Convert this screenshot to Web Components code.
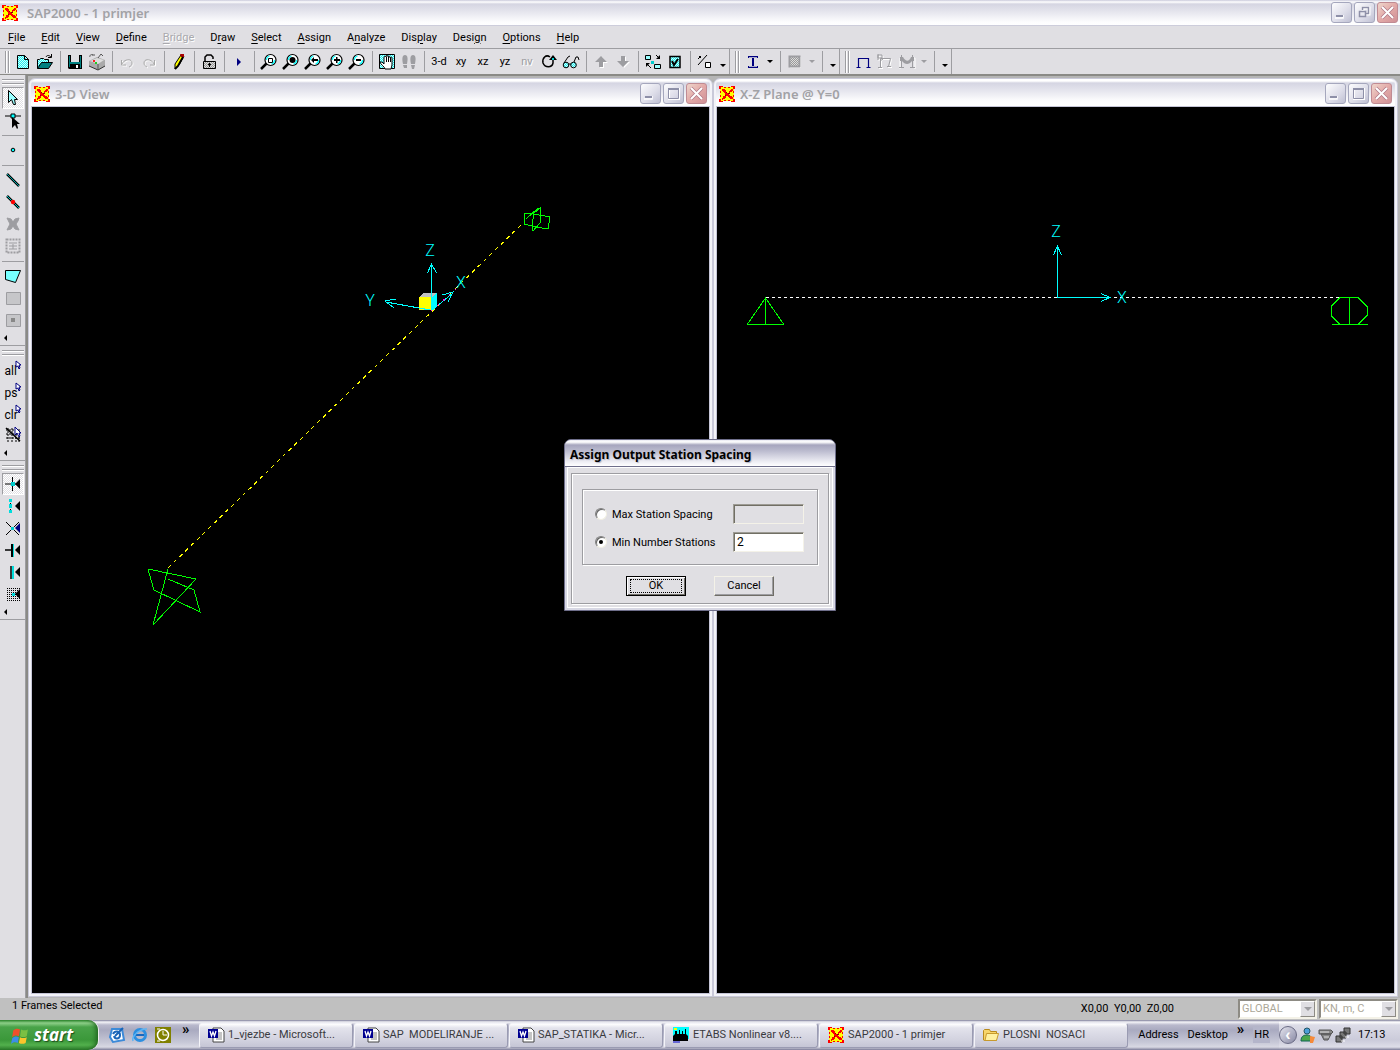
<!DOCTYPE html>
<html lang="hr">
<head>
<meta charset="utf-8">
<title>SAP2000 - 1 primjer</title>
<style>
    html, body {
        margin: 0;
        height: 100%;
    }

    body {
        --face: #e0dfe3;
        --shadow: #9d9da1;
        --title-font: "Noto Sans", "Open Sans", sans-serif;
        font: 11px/14px Roboto, "Liberation Sans", sans-serif;
        color: #000;
        background: var(--face);
        overflow: hidden;
    }
</style>
</head>
<body>
<sap-app></sap-app>

<script>
const MAGNIFIER = '<path d="M0 15l6-6" stroke="#000" stroke-width="2.500"/><circle cx="9.500" cy="6" r="5.500" fill="#fff" stroke="#000" stroke-width="1.200"/><path d="M5.500 6a4 4 0 0 1 3-4M13.500 6a4 4 0 0 1-3 4" stroke="#0ff" stroke-width="1.200"/>';
const NODE_ARROW = '<path d="M15 3v10l-5-5z" fill="#000"/>';
const PICK = '<path d="M10 0v8l2-2 2 4 1-1-1-3h2z" fill="#fff" stroke="#000080"/>';
const WORD = '<path d="M5 1h8l3 3v11H5z" fill="#fff" stroke="#444"/><path d="M8 6h6M8 8h6M8 10h6M8 12h6" stroke="#888"/><path d="M0 2h10v9H0z" fill="#000090"/><path d="M2 4l1.500 5L5 5l1.500 4L8 4" stroke="#fff" stroke-width="1.300"/>';

// 16x16 drawings, #cyan and #gray are the dithered fills
const ICONS = {
    sap: '<path d="M1 1h14v14H1z" fill="#ff0"/><path d="M0 0h4v1H2v2H0zM12 0h4v3h-2V1h-2zM0 13h2v2h2v1H0zM12 15h2v-2h2v3h-4zM5 1h2v1H5zM9 1h2v1H9zM5 14h2v1H5zM9 14h2v1H9zM1 5h1v2H1zM1 9h1v2H1zM14 5h1v2h-1zM14 9h1v2h-1z" fill="#f00"/><path d="M3 3h3v1h1v2h1v1h2V5h1V4h1V3h2v2h-1v1h-2v1h-1v2h1v1h2v1h1v2h-3v-1h-1v-1H9v-1H7v2H6v1H4v1H3v-2h1v-2h2V7H5V6H4V5H3z" fill="#f00"/><path d="M7 6h1v1H7zM9 7h2v1H9zM6 9h1v1H6z" fill="#800"/>',
    new: '<path d="M2.500 1.500h7l4 4v9h-11z" fill="url(#cyan)" stroke="#000"/><path d="M9.500 1.500v4h4" stroke="#000"/>',
    open: '<path d="M0.500 14.500v-9h2l1-1h3l1 1h4v3" fill="url(#cyan)" stroke="#000"/><path d="M0.500 14.500l4-6h11l-4 6z" fill="#008080" stroke="#000"/><path d="M9 3c1-2 3-2 5 0M14.500 0v3.500H11" stroke="#000"/>',
    save: '<path d="M1 1h14v14H2l-1-1z" fill="#000"/><path d="M2 2h1v11H2zM13 2h1v12h-1z" fill="#008080"/><path d="M4 1h8v7H4z" fill="#e0dfe3"/><path d="M2 8h12v2H2z" fill="#008080"/><path d="M9 11h2v3H9z" fill="#fff"/>',
    print: '<path d="M0 7l8-4 8 3v6l-7 4-9-4z" fill="#aaa"/><path d="M1 7l7-3 7 2-6 4z" fill="#ddd"/><path d="M0 12l9 4 7-4" stroke="#333"/><path d="M9 10v5M3 1h3M1 3c-1-2 2-3 3-2M9 4l3-4 2 2" stroke="#555"/><path d="M4 6h2v2H4z" fill="#f22"/><path d="M6 8h2v2H6z" fill="#2c2"/>',
    undo: '<path d="M2.500 6v5H7M3 10c2-5 10-6 10-1 0 2-1 3-3 4" stroke="#fff" transform="translate(1 1)"/><path d="M2.500 6v5H7M3 10c2-5 10-6 10-1 0 2-1 3-3 4" stroke="#aaa"/>',
    redo: '<path d="M13.500 6v5H9M13 10C11 5 3 4 3 9c0 2 1 3 3 4" stroke="#fff" transform="translate(1 1)"/><path d="M13.500 6v5H9M13 10C11 5 3 4 3 9c0 2 1 3 3 4" stroke="#aaa"/>',
    pencil: '<path d="M10 1l3 1-5 9-4 4v-5z" fill="#ff0" stroke="#000"/><path d="M9 0h4v3h-3z" fill="#a00"/><path d="M12 3L7 12l-3 3" stroke="#000" stroke-width="2"/>',
    lock: '<path d="M4 7V3l2-2h4l2 2v2" stroke="#000" stroke-width="1.500"/><path d="M2.500 7.500h12v7h-12z" fill="url(#gray)" stroke="#000"/><path d="M8.500 9v4M7 10.500h3" stroke="#000"/>',
    run: '<path d="M6 4l4 4-4 4z" fill="#000080"/>',
    zoomwin: MAGNIFIER + '<path d="M7.500 4.500h4v4h-4z" stroke="#000"/>',
    zoomfull: MAGNIFIER + '<circle cx="9.500" cy="6" r="3" fill="#000"/>',
    zoomprev: MAGNIFIER + '<path d="M6 6l3-3v2h4v2H9v2z" fill="#000"/>',
    zoomin: MAGNIFIER + '<path d="M9 3h1.500v2H13v2h-2.500v2H9V7H7V5h2z" fill="#000"/>',
    zoomout: MAGNIFIER + '<path d="M7 5h5v2H7z" fill="#000"/>',
    pan: '<path d="M0.500 0.500h15v14H0.500z" fill="url(#cyan)" stroke="#000"/><path d="M6 15c0-2-5-5-5-7h2l2 2V3c1-1 2-1 2 0V2c1-1 2-1 2 0v1c1-1 2-1 2 0v1c1-1 2-1 2 0v7l-1 4z" fill="#fff" stroke="#000"/><path d="M7.500 3v5M9.500 3v5M11.500 4v4" stroke="#000"/>',
    feet: '<path d="M4 1c3 0 3 4 2 9H2C1 5 1 1 4 1zM12 1c3 0 3 4 2 9h-4C9 5 9 1 12 1zM2 11h4v3H3zM10 11h4l-1 4h-2z" fill="#9d9da1"/>',
    rotate: '<path d="M9 3C5 0 1 4 2 9c2 5 9 5 10 0V6" stroke="#000" stroke-width="1.500"/><path d="M8 6l4-5 4 5z" fill="#000"/><path d="M11 4h2v2h-2z" fill="#0cc"/>',
    glasses: '<circle cx="3" cy="11" r="2.800" fill="url(#cyan)" stroke="#000"/><circle cx="10.500" cy="11" r="2.800" fill="url(#cyan)" stroke="#000"/><path d="M1 9l4-6 2-1M11 8l2-5h2l1 3M6 10h2" stroke="#000"/>',
    up: '<path d="M9 3l6 6h-4v5H7V9z" fill="#fff"/><path d="M8 2l6 6h-4v5H6V8H2z" fill="#9d9da1"/>',
    down: '<path d="M9 14l6-6h-4V3H7z" fill="#fff"/><path d="M8 13l6-6h-4V2H6v5H2z" fill="#9d9da1"/>',
    shrink: '<path d="M0.500 1.500h5v4h-5zM9.500 10.500h6v4h-6z" fill="#9ff" stroke="#000"/><path d="M15 5h-4l4-4zM1 9h4l-4 4z" fill="#000"/><path d="M11 1l3 3M1 9l5 5" stroke="#000"/><path d="M6 7h3v3H6z" fill="#0cc"/>',
    check: '<path d="M3 2.500h10v11H3z" fill="url(#cyan)" stroke="#000" stroke-width="1.500"/><path d="M5 7l2 4 4-6" stroke="#000" stroke-width="2"/>',
    ratio: '<path d="M1 11L10 1" stroke="#000"/><path d="M2 2h2v2H2zM1 4h1v1H1z" fill="#000"/><path d="M8.500 8.500h5v5h-5z" fill="#fff" stroke="#000"/>',
    ibeam: '<path d="M3 2h10v2H9v8h4v2H3v-2h4V4H3z" fill="#000080"/><path d="M4 3.500h8M4 12.500h8" stroke="#aac"/>',
    area: '<path d="M3 3h11v11H3z" fill="#fff"/><path d="M2.500 2.500h10v10h-10z" fill="url(#gray)" stroke="#9d9da1" stroke-width="2"/>',
    portal: '<path d="M3.500 13V4.500h10V13M1.500 13.500h4M11.500 13.500h4" stroke="#000080" stroke-width="1.200"/>',
    portal2: '<path d="M4.500 14V5.500h10l-2 8M2 14.500h4M11 13.500h4M2 2h4v3H2zM4 7l3-2M2 1v6" stroke="#fff"/><path d="M3.500 13V4.500h10l-2 8M1 13.500h4M10 12.500h4M1 1h4v3H1zM3 7l3-2M1 0v6" stroke="#9d9da1"/>',
    moment: '<path d="M1 15V4h3c3 5 7 5 9 0h3v11" stroke="#fff"/><path d="M1 3h3c3 5 6 5 8 0h3v4h-2c-3 4-7 4-10 0H1z" fill="#9d9da1"/><path d="M2.500 1v12M13.500 1v12M0 13.500h5M11 13.500h5" stroke="#9d9da1"/>',
    pointer: '<path d="M3.500 0.500v12l3-3 2 5h2l-1-5h3z" fill="#9ff" stroke="#000"/>',
    reshape: '<path d="M0 4h16" stroke="#000"/><path d="M6 2h4v4H6z" fill="#0ff" stroke="#000"/><path d="M7 5v11l3-3 2 4 1-1-1-4h3z" fill="#000"/>',
    dot: '<circle cx="8" cy="8" r="1.800" fill="#0ff" stroke="#000"/>',
    line: '<path d="M2 2l12 12" stroke="#000" stroke-width="2.500"/><path d="M2 2l12 12" stroke="#0aa"/>',
    linedot: '<path d="M2 2l12 12" stroke="#000" stroke-width="2.500"/><path d="M2 2l12 12" stroke="#0cc"/><circle cx="8" cy="8" r="2.200" fill="#f00"/>',
    brace: '<path d="M2 2l4 1 2 3 2-3 4-1-1 3-2 3 3 6-4-1-2-3-2 3-4 1 3-6z" fill="#9d9da1" stroke="#9d9da1"/>',
    quick: '<path d="M1.500 1.500h13v13h-13z" stroke="#9d9da1" stroke-width="2" stroke-dasharray="2 1"/><path d="M4 5h8M4 8h8M4 11h8M8 6v5" stroke="#9d9da1"/>',
    poly: '<path d="M0.500 2.500h15l-5 12-10-3z" fill="#7ff" stroke="#000"/>',
    grayrect: '<path d="M1.500 2.500h14v12h-14z" fill="#c6c6c9" stroke="#9d9da1"/>',
    graydot: '<path d="M1.500 2.500h14v12h-14z" fill="#c6c6c9" stroke="#9d9da1"/><path d="M6 6h4v4H6z" fill="#888"/>',
    clearsel: '<path d="M1 3h14M1 7h14M1 11h14M3 1v14M7 1v14M11 1v14M14 4v11" stroke="#000" stroke-dasharray="2 1"/><path d="M1 1l14 13" stroke="#000" stroke-width="1.500"/>' + PICK,
    snappoint: '<path d="M0 8h14M7.500 1v14" stroke="#000"/><path d="M6 6h4v4H6z" fill="#0cc"/>' + NODE_ARROW,
    snapends: '<path d="M5.500 2v13" stroke="#000" stroke-dasharray="2 1"/><path d="M4 1h3v3H4zM4 6h3v4H4zM4 12h3v3H4z" fill="#0dd"/>' + NODE_ARROW,
    snapcross: '<path d="M1 2l13 13M1 15L14 2" stroke="#000"/><path d="M15 3v10l-5-5z" fill="#000080"/><path d="M6 7h3v3H6z" fill="#0cc"/>',
    snapperp: '<path d="M0 8h7" stroke="#000" stroke-width="1.500"/><path d="M7 2v13" stroke="#000" stroke-width="2"/><path d="M8.500 2v13" stroke="#0dd"/>' + NODE_ARROW,
    snapline: '<path d="M6 2v13" stroke="#000" stroke-width="1.500"/><path d="M8 2v13" stroke="#0dd" stroke-width="2"/>' + NODE_ARROW,
    snapgrid: '<path d="M2 2.500h13M2 4.500h13M2 6.500h13M2 8.500h13M2 10.500h13M2 12.500h13M2 14.500h13" stroke="#000" stroke-dasharray="1 1"/><path d="M7 7h3v3H7z" fill="#0dd"/>' + NODE_ARROW,
    outlook: '<path d="M3 2h10l2 11-11 2-3-5z" fill="#fff" stroke="#3c8ad8" stroke-width="2"/><path d="M4 7c2-4 7-3 7 1s-5 5-6 1M6 9l8-8" stroke="#1a65b8" stroke-width="2"/>',
    ie: '<circle cx="8" cy="8" r="5.500" stroke="#2d8fe0" stroke-width="3"/><path d="M4 8h8" stroke="#1668c0" stroke-width="2"/><path d="M1 14C-1 9 9 1 15 2" stroke="#5bb4f5" stroke-width="1.500"/>',
    clock: '<path d="M0 0h16v16H0z" fill="#808000"/><circle cx="8" cy="8" r="5.500" stroke="#fff" stroke-width="1.500"/><path d="M8 4v4h4M2 2h3M2 14h3" stroke="#fff"/>',
    word: WORD,
    etabs: '<path d="M0 0h16v12H0z" fill="#0ff"/><path d="M0 14v-5l2-2V4h2v3h2V3h1v4h2V4h1v3h2V2h1v5l2 2v5z" fill="#000"/><path d="M1 1h3v2H1z" fill="#ff0"/><path d="M0 15h7" stroke="#00c"/>',
    folder: '<path d="M0.500 13V3.500l1-1h5l1 2h6v9h-12z" fill="#f7d56a" stroke="#b98a1d"/><path d="M3.500 6.500h12l-2 7H2z" fill="#fff0a0" stroke="#c89a2d"/>',
    person: '<circle cx="8" cy="4" r="3" fill="#4b9fd8" stroke="#256"/><path d="M2 14c0-5 3-6 6-6 4 0 5 3 5 6z" fill="#4ba64b" stroke="#165"/><path d="M11 9l5 1-2 6h-3z" fill="#f58a3a"/>',
    scanner: '<path d="M2 3h12l2 2-2 2H2zM4 7h10l-3 6H7z" fill="#888" stroke="#555"/><path d="M3 5h9M7 10h5" stroke="#ddd"/>',
    network: '<path d="M9 1h6v6H9zM5 5h6v6H5zM1 9h6v6H1z" fill="#777" stroke="#333"/><path d="M10 10h4M6 14h4" stroke="#fff"/>',
    flag: '<path d="M2 4c2-2 4-2 6-1L7 9c-2-1-4-1-6 1z" fill="#f0502a"/><path d="M9 3c2 1 4 1 6 0l-1 6c-2 1-4 1-6 0z" fill="#7bc043"/><path d="M1 11c2-2 4-2 6-1l-1 5c-2-1-4-1-6 1z" fill="#3c8ee8"/><path d="M8 10c2 1 4 1 6 0l-1 5c-2 1-4 1-6 0z" fill="#fbc52c"/>'
};

class XpIcon extends HTMLElement {
    connectedCallback() {
        const size = this.getAttribute('size') || '16';
        this.attachShadow({ mode: 'open' }).innerHTML = `
            <style>
                :host { display: block; flex: none; width: ${size}px; height: ${size}px; white-space: normal; }
                svg { display: block; width: 100%; height: 100%; overflow: visible; }
            </style>
            <svg viewBox="0 0 16 16" fill="none" aria-hidden="true">
                <defs>
                    <pattern id="cyan" width="2" height="2" patternUnits="userSpaceOnUse">
                        <path d="M0 0h2v2H0z" fill="#cff"/><path d="M0 0h1v1H0zM1 1h1v1H1z" fill="#2ee"/>
                    </pattern>
                    <pattern id="gray" width="2" height="2" patternUnits="userSpaceOnUse">
                        <path d="M0 0h2v2H0z" fill="#ddd"/><path d="M0 0h1v1H0zM1 1h1v1H1z" fill="#999"/>
                    </pattern>
                </defs>
                ${ICONS[this.getAttribute('name')]}
            </svg>
        `;
    }
}

class ToolButton extends HTMLElement {
    connectedCallback() {
        const icon = this.getAttribute('icon');
        const pressed = this.hasAttribute('pressed');
        this.attachShadow({ mode: 'open' }).innerHTML = `
            <style>
                :host { display: block; flex: none; width: 22px; height: 22px; }
                button {
                    display: flex;
                    align-items: center;
                    justify-content: center;
                    box-sizing: border-box;
                    width: 100%;
                    height: 100%;
                    padding: 0;
                    border: 1px solid transparent;
                    background: none;
                    font: inherit;
                    color: #000;
                }
                button:disabled { color: var(--shadow); text-shadow: 1px 1px #fff; }
                button[aria-pressed="true"] {
                    border-color: var(--shadow) #fff #fff var(--shadow);
                    background: repeating-conic-gradient(#fff 0 25%, #e0dfe3 0 50%) 0 0 / 2px 2px;
                }
            </style>
            <button type="button" aria-label="${this.getAttribute('label') || icon}"
                ${pressed ? 'aria-pressed="true"' : ''} ${this.hasAttribute('off') ? 'disabled' : ''}>
                ${icon ? `<xp-icon name="${icon}"></xp-icon>` : '<slot></slot>'}
            </button>
        `;
    }
}

class ToolDrop extends HTMLElement {
    connectedCallback() {
        this.attachShadow({ mode: 'open' }).innerHTML = `
            <style>
                :host { display: flex; flex: none; width: 12px; height: 22px; }
                :host([more]) { width: 13px; }
                button {
                    display: flex;
                    align-items: center;
                    justify-content: center;
                    width: 100%;
                    padding: 0;
                    border: 0;
                    background: none;
                    color: #000;
                }
                :host([more]) button { padding-top: 7px; }
                button:disabled { color: var(--shadow); }
                i { border: 3px solid transparent; border-top-color: currentColor; border-bottom: 0; }
                :host([side]) { width: 22px; height: 14px; }
                :host([side]) button { justify-content: flex-start; padding-left: 2px; }
                :host([side]) i { border: 3px solid transparent; border-right-color: #000; border-left: 0; }
            </style>
            <button type="button" aria-label="More" ${this.hasAttribute('off') ? 'disabled' : ''}><i></i></button>
        `;
    }
}

class SelectButton extends HTMLElement {
    connectedCallback() {
        this.attachShadow({ mode: 'open' }).innerHTML = `
            <style>
                :host { display: block; width: 22px; height: 22px; }
                button {
                    display: grid;
                    grid-template-columns: 10px 7px;
                    justify-content: start;
                    width: 100%;
                    height: 100%;
                    padding: 2px 0 2px 3px;
                    border: 0;
                    background: none;
                    font: 12px/14px Roboto, "Liberation Sans", sans-serif;
                    color: #000;
                }
                span { align-self: end; justify-self: start; }
                svg { width: 7px; height: 10px; overflow: visible; }
            </style>
            <button type="button">
                <span><slot></slot></span>
                <svg viewBox="0 0 7 10" aria-hidden="true"><path d="M1 1v6l2-1 1 3 1-1-1-3h2z" fill="#fff" stroke="#000080"/></svg>
            </button>
        `;
    }
}

class ToolGroup extends HTMLElement {
    connectedCallback() {
        this.attachShadow({ mode: 'open' }).innerHTML = `
            <style>
                :host {
                    display: flex;
                    align-items: center;
                    box-sizing: border-box;
                    border-right: 1px solid var(--shadow);
                }
                .grip {
                    flex: none;
                    box-sizing: border-box;
                    width: 4px;
                    height: 22px;
                    margin: 0 3px 0 5px;
                    border: solid var(--shadow);
                    border-width: 0 1px;
                    box-shadow: 1px 0 #fff, inset 1px 0 #fff;
                }
                ::slotted(hr) {
                    flex: none;
                    width: 1px;
                    height: 21px;
                    margin: 0 3px 0 4px;
                    border: 0;
                    background: var(--shadow);
                }
                :host([vertical]) {
                    flex-direction: column;
                    border-right: 0;
                    border-bottom: 1px solid var(--shadow);
                }
                :host([vertical]) .grip {
                    width: 22px;
                    height: 5px;
                    margin: 4px 0 3px;
                    border-width: 1px 0;
                    box-shadow: 0 1px #fff, inset 0 1px #fff;
                }
                :host([vertical]) ::slotted(hr) {
                    width: 22px;
                    height: 1px;
                    margin: 4px 0 3px;
                }
            </style>
            <div class="grip"></div>
            <slot></slot>
        `;
    }
}

class CaptionButtons extends HTMLElement {
    connectedCallback() {
        const middle = this.hasAttribute('restore')
            ? '<path d="M9 9V6h6v6h-3" stroke="#fff" stroke-width="3"/><path d="M8.500 8V5.500h6v6H12" stroke="#8e90a8" stroke-width="1.500"/><path d="M5.500 9.500h6v5h-6z" fill="#e9e9f1" stroke="#8e90a8" stroke-width="1.500"/>'
            : '<path d="M6 6h10v10H6z" stroke="#fff" stroke-width="2"/><path d="M5.500 5.500h10v10h-10z" stroke="#8e90a8"/><path d="M5 6h11" stroke="#8e90a8" stroke-width="2"/>';
        this.attachShadow({ mode: 'open' }).innerHTML = `
            <style>
                :host { display: flex; flex: none; gap: 2px; }
                button {
                    box-sizing: border-box;
                    width: 21px;
                    height: 21px;
                    padding: 0;
                    border: 1px solid #a5a7bd;
                    border-radius: 3px;
                    background: linear-gradient(135deg, #fdfdfe, #dcdce8 60%, #bfc0d3);
                }
                .close { border-color: #c08b93; background: linear-gradient(135deg, #eed6cc, #e3aaa8 50%, #cf9096); }
                svg { display: block; width: 19px; height: 19px; }
            </style>
            <button type="button" aria-label="Minimize"><svg viewBox="1 1 19 19" fill="none"><path d="M4 16h8v-3" stroke="#fff" stroke-width="1.500"/><path d="M5 14h7" stroke="#8e90a8" stroke-width="2"/></svg></button>
            <button type="button" aria-label="Maximize"><svg viewBox="1 1 19 19" fill="none">${middle}</svg></button>
            <button type="button" class="close" aria-label="Close"><svg viewBox="1 1 19 19" fill="none"><path d="M5 5l11 11M16 5L5 16" stroke="#b07a88" stroke-width="3.500"/><path d="M5 5l11 11M16 5L5 16" stroke="#fff" stroke-width="2"/></svg></button>
        `;
    }
}

class MdiWindow extends HTMLElement {
    connectedCallback() {
        this.attachShadow({ mode: 'open' }).innerHTML = `
            <style>
                :host {
                    display: flex;
                    flex-direction: column;
                    flex: 1;
                    min-width: 0;
                    box-sizing: border-box;
                    border: 1px solid #c9c9d9;
                    border-radius: 7px 7px 0 0;
                    background: #f3f3f8;
                    padding: 0 2px 2px;
                }
                header {
                    display: flex;
                    align-items: center;
                    flex: none;
                    gap: 5px;
                    height: 27px;
                    padding: 2px 3px 0;
                    box-sizing: border-box;
                    border-radius: 6px 6px 0 0;
                    background: linear-gradient(#fff, #fff 2px, #d5d5e2 4px, #e6e6ee 12px, #fdfdfe 22px, #fff);
                }
                h2 { flex: 1; margin: 0; font: 600 13px/18px var(--title-font); color: #a2a2a6; }
                .view {
                    flex: 1;
                    min-height: 0;
                    border: 1px solid #c5c5d6;
                    background: #000;
                    overflow: hidden;
                }
            </style>
            <header>
                <xp-icon name="sap"></xp-icon>
                <h2>${this.getAttribute('caption')}</h2>
                <caption-buttons></caption-buttons>
            </header>
            <div class="view"><slot></slot></div>
        `;
    }
}

const VIEW_STYLE = `
    <style>
        :host { display: block; height: 100%; }
        svg { display: block; width: 100%; height: 100%; }
        path { fill: none; stroke-width: 1; shape-rendering: crispEdges; }
        text { font: 300 16px/16px Roboto, "Liberation Sans", sans-serif; fill: #0ff; text-anchor: middle; }
        .axis { stroke: #0ff; }
        .support { stroke: #0f0; }
    </style>
`;

class SpaceView extends HTMLElement {
    connectedCallback() {
        this.attachShadow({ mode: 'open' }).innerHTML = `
            ${VIEW_STYLE}
            <svg role="img" aria-label="3-D View">
                <path d="M136 461L492 115" stroke="#ff0" stroke-dasharray="4 4"/>
                <path class="support" d="M116 462l48 10M116 462l6 21M122 483l46 22-6-22-26-11M136 462l-15 56 43-46"/>
                <path class="support" d="M493 106l9 1 16 3-2 12-12-2-12-3zM494 112l11-10 3-1v15l-7 8-1-6 2-12 6-5"/>
                <path d="M387 190l4-4h14l-6 5z" style="fill:#c0c0c0"/>
                <path d="M387 190h12v13h-12z" style="fill:#ff0"/>
                <path d="M399 191l6-5v12l-6 6z" style="fill:#0ff"/>
                <path class="axis" d="M399.500 203v-46M395.500 166l4-9 5 9M398 203l-44-8M364 192l-11 2 9 7M399 204l22-18M410 188l11-3-5 10"/>
                <path d="M399 204l26-23" stroke="#f0f" stroke-dasharray="2 6"/>
                <text x="398" y="149">Z</text>
                <text x="429" y="181">X</text>
                <text x="338" y="199">Y</text>
            </svg>
        `;
    }
}

class PlaneView extends HTMLElement {
    connectedCallback() {
        this.attachShadow({ mode: 'open' }).innerHTML = `
            ${VIEW_STYLE}
            <svg role="img" aria-label="X-Z Plane">
                <path d="M49 190.500h584" stroke="#fff" stroke-dasharray="3 3"/>
                <path class="support" d="M48.500 191l18 26h-36zM48.500 191v26"/>
                <path class="support" d="M623 190.500h18l9 9v9l-9 9h-18l-9-9v-9zM632.500 190v27M615 217.500h36"/>
                <path class="axis" d="M340.500 190v-51M336.500 148l4-9 4 9M340 190.500h52M384 186.500l9 4-9 4"/>
                <text x="339" y="130">Z</text>
                <text x="405" y="196">X</text>
            </svg>
        `;
    }
}

class MenuBar extends HTMLElement {
    connectedCallback() {
        // an underscore stands before the access key
        const items = this.getAttribute('items').split(' ');
        this.attachShadow({ mode: 'open' }).innerHTML = `
            <style>
                :host { display: block; flex: none; }
                nav { display: flex; align-items: center; height: 23px; box-sizing: border-box; border-bottom: 1px solid var(--shadow); }
                button { padding: 1px 8px 0; border: 0; background: none; font: inherit; color: #000; }
                button:disabled { color: #a9a9ad; text-shadow: 1px 1px #fff; }
                u { text-underline-offset: 2px; }
            </style>
            <nav>
                ${items.map(item => `<button type="button" ${item === '_Bridge' ? 'disabled' : ''}>${item.replace(/_(.)/, '<u>$1</u>')}</button>`).join('')}
            </nav>
        `;
    }
}

class StationDialog extends HTMLElement {
    connectedCallback() {
        this.attachShadow({ mode: 'open' }).innerHTML = `
            <style>
                :host {
                    display: block;
                    position: absolute;
                    inset: 0;
                    width: 272px;
                    height: max-content;
                    margin: auto;
                    box-sizing: border-box;
                    border: 1px solid #6e6e8a;
                    border-radius: 7px 7px 0 0;
                    background: #d8d8e4;
                    padding: 0 2px 2px;
                    color: #000;
                }
                h1 {
                    margin: 0 -2px;
                    padding: 3px 5px 0;
                    border-bottom: 1px solid #6e6e8a;
                    border-radius: 6px 6px 0 0;
                    background: linear-gradient(#e9e9f2, #fff 2px, #a6a5be 5px, #bcbccf 11px, #efeff5 22px, #fff);
                    font: 700 12px/23px var(--title-font);
                    text-shadow: 1px 1px 1px #b5b5c4;
                }
                form { border: 1px solid #fff; background: var(--face); padding: 5px 3px 3px; }
                .panel, fieldset { border: 1px solid var(--shadow); box-shadow: 1px 1px #fff, inset 1px 1px #fff; }
                .panel { padding: 15px 10px 7px; }
                fieldset { display: grid; gap: 8px; margin: 0; padding: 14px 13px 12px 12px; }
                .row { display: flex; align-items: center; height: 20px; }
                label { flex: 1; padding: 2px 0 0 5px; }
                input[type="radio"] {
                    appearance: none;
                    display: grid;
                    place-items: center;
                    box-sizing: border-box;
                    width: 12px;
                    height: 12px;
                    margin: 0;
                    border: 1px solid;
                    border-color: #808080 #f1efe2 #f1efe2 #808080;
                    border-radius: 50%;
                    background: #fff;
                    box-shadow: inset 1px 1px #666;
                }
                input[type="radio"]:checked::before {
                    content: "";
                    width: 4px;
                    height: 4px;
                    border-radius: 50%;
                    background: #000;
                }
                input[type="text"] {
                    box-sizing: border-box;
                    width: 71px;
                    height: 20px;
                    padding: 0 3px;
                    border: 1px solid;
                    border-color: #9d9b94 #f4f2e8 #f4f2e8 #9d9b94;
                    border-radius: 0;
                    background: #fff;
                    box-shadow: inset 1px 1px #716f64;
                    font: 12px/14px Roboto, "Liberation Sans", sans-serif;
                }
                input[type="text"]:disabled { background: var(--face); }
                .actions { display: flex; justify-content: center; gap: 28px; margin-top: 11px; }
                button {
                    box-sizing: border-box;
                    width: 60px;
                    height: 20px;
                    padding: 0;
                    border: 1px solid;
                    border-color: #f4f2e8 #6f6d66 #6f6d66 #f4f2e8;
                    background: var(--face);
                    box-shadow: inset -1px -1px var(--shadow);
                    font: inherit;
                    color: #000;
                }
                .default { border-color: #000; box-shadow: inset 1px 1px #fff, inset -1px -1px #6f6d66; }
                .default span { display: block; margin: 0 3px; border: 1px dotted #000; line-height: 12px; }
            </style>
            <h1>Assign Output Station Spacing</h1>
            <form>
                <div class="panel">
                    <fieldset>
                        <div class="row">
                            <input type="radio" name="mode" id="max">
                            <label for="max">Max Station Spacing</label>
                            <input type="text" aria-label="Spacing" disabled>
                        </div>
                        <div class="row">
                            <input type="radio" name="mode" id="min" checked>
                            <label for="min">Min Number Stations</label>
                            <input type="text" aria-label="Stations" value="2">
                        </div>
                    </fieldset>
                    <div class="actions">
                        <button type="button" class="default"><span>OK</span></button>
                        <button type="button">Cancel</button>
                    </div>
                </div>
            </form>
        `;
    }
}

class StatusBar extends HTMLElement {
    connectedCallback() {
        this.attachShadow({ mode: 'open' }).innerHTML = `
            <style>
                :host {
                    display: flex;
                    align-items: center;
                    flex: none;
                    box-sizing: border-box;
                    height: 22px;
                    padding: 0 2px 0 12px;
                    background: #c0c0c0;
                }
                .message { flex: 1; align-self: flex-start; padding-top: 1px; }
                .coords { margin-right: 62px; white-space: pre; }
                .combo { position: relative; margin-left: 2px; }
                select {
                    appearance: none;
                    display: block;
                    box-sizing: border-box;
                    width: 79px;
                    height: 20px;
                    padding: 0 2px;
                    border: 2px solid;
                    border-color: #8d8b84 #f4f2e8 #f4f2e8 #8d8b84;
                    border-radius: 0;
                    background: #fff;
                    font: inherit;
                    color: #aca899;
                    opacity: 1;
                }
                .arrow {
                    position: absolute;
                    inset: 2px 2px 2px auto;
                    display: grid;
                    place-items: center;
                    box-sizing: border-box;
                    width: 15px;
                    border: 1px solid;
                    border-color: #fff #8d8b84 #8d8b84 #fff;
                    background: var(--face);
                    pointer-events: none;
                }
                .arrow::before { content: ""; border: 4px solid transparent; border-top-color: #9d9da1; border-bottom: 0; }
            </style>
            <span class="message">1 Frames Selected</span>
            <span class="coords">X0,00  Y0,00  Z0,00</span>
            <div class="combo"><select disabled aria-label="Coordinate system"><option>GLOBAL</option></select><span class="arrow"></span></div>
            <div class="combo"><select disabled aria-label="Units"><option>KN, m, C</option></select><span class="arrow"></span></div>
        `;
    }
}

class TaskButton extends HTMLElement {
    connectedCallback() {
        this.attachShadow({ mode: 'open' }).innerHTML = `
            <style>
                :host { display: block; flex: 1; min-width: 0; max-width: 154px; }
                button {
                    display: flex;
                    align-items: center;
                    gap: 4px;
                    box-sizing: border-box;
                    width: 100%;
                    height: 25px;
                    padding: 0 8px;
                    border: 1px solid #f4f4f9;
                    border-right-color: #9a9bb2;
                    border-bottom-color: #9a9bb2;
                    border-radius: 3px;
                    background: linear-gradient(#fff, #e3e3ec 4px, #d2d2df 16px, #c5c5d5);
                    font: inherit;
                    color: #3a3a3e;
                    white-space: pre;
                }
            </style>
            <button type="button"><xp-icon name="${this.getAttribute('icon')}"></xp-icon><slot></slot></button>
        `;
    }
}

class TaskBar extends HTMLElement {
    connectedCallback() {
        this.attachShadow({ mode: 'open' }).innerHTML = `
            <style>
                :host {
                    display: flex;
                    align-items: stretch;
                    flex: none;
                    box-sizing: border-box;
                    height: 30px;
                    background: linear-gradient(#7c7c98, #f4f4f8 2px, #b9b9cc 5px, #a9aac0 10px, #c6c7d6 22px, #d8d8e3 27px, #7c7c98);
                }
                .start {
                    display: flex;
                    align-items: center;
                    gap: 5px;
                    flex: none;
                    box-sizing: border-box;
                    width: 98px;
                    padding: 0 0 0 11px;
                    border: 0;
                    border-radius: 0 10px 10px 0;
                    background: linear-gradient(#2f8a2f, #8fd08a 3px, #49a349 7px, #3b983a 20px, #52b04c 25px, #2b7a2b);
                    box-shadow: inset -4px 0 5px -2px #1e641e, 1px 0 #eee;
                    font: italic 700 17px/22px "Open Sans", sans-serif;
                    color: #fff;
                    text-shadow: 1px 1px 1px #1c4f1c;
                }
                .quick { display: flex; align-items: center; gap: 7px; flex: none; width: 90px; padding-left: 11px; }
                .more { align-self: flex-start; font-weight: 700; font-size: 15px; line-height: 18px; }
                .quick .more { padding-left: 4px; }
                .tasks { display: flex; align-items: center; flex: 1; gap: 1px; min-width: 0; }
                .bands { display: flex; align-items: center; flex: none; gap: 9px; padding-left: 9px; }
                .lang { padding: 1px 1px; background: #b4b5ca; }
                .tray {
                    display: flex;
                    align-items: center;
                    flex: none;
                    gap: 2px;
                    box-sizing: border-box;
                    width: 121px;
                    margin-left: 9px;
                    background: linear-gradient(#7c7c98, #fff 2px, #dcdce7 5px, #cbcbda 20px, #dedee8 27px, #7c7c98);
                }
                .tray time { padding-left: 5px; }
                .round {
                    width: 18px;
                    height: 18px;
                    padding: 0;
                    border: 1px solid #6a6b85;
                    border-radius: 50%;
                    background: linear-gradient(135deg, #e4e4ee, #8889a4);
                    color: #fff;
                    font: 700 16px/12px "Liberation Sans", sans-serif;
                }
            </style>
            <button type="button" class="start"><xp-icon name="flag" size="18"></xp-icon>start</button>
            <div class="quick">
                <xp-icon name="outlook"></xp-icon>
                <xp-icon name="ie"></xp-icon>
                <xp-icon name="clock"></xp-icon>
                <span class="more">»</span>
            </div>
            <div class="tasks">
                <task-button icon="word">1_vjezbe - Microsoft...</task-button>
                <task-button icon="word">SAP  MODELIRANJE ...</task-button>
                <task-button icon="word">SAP_STATIKA - Micr...</task-button>
                <task-button icon="etabs">ETABS Nonlinear v8....</task-button>
                <task-button icon="sap">SAP2000 - 1 primjer</task-button>
                <task-button icon="folder">PLOSNI  NOSACI</task-button>
            </div>
            <div class="bands">
                <span>Address</span>
                <span>Desktop</span>
                <span class="more">»</span>
                <span class="lang">HR</span>
            </div>
            <div class="tray">
                <button type="button" class="round" aria-label="Show hidden icons">‹</button>
                <xp-icon name="person"></xp-icon>
                <xp-icon name="scanner"></xp-icon>
                <xp-icon name="network"></xp-icon>
                <time>17:13</time>
            </div>
        `;
    }
}

class SapApp extends HTMLElement {
    connectedCallback() {
        this.attachShadow({ mode: 'open' }).innerHTML = `
            <style>
                :host { display: flex; flex-direction: column; height: 100vh; position: relative; }
                .title {
                    display: flex;
                    align-items: center;
                    flex: none;
                    gap: 9px;
                    box-sizing: border-box;
                    height: 26px;
                    padding: 0 2px;
                    border-bottom: 1px solid #cdcddb;
                    background: linear-gradient(#c9c9da, #fff 2px, #d5d5e2 4px, #e6e6ee 12px, #fdfdfe 22px, #fff);
                }
                h1 { flex: 1; margin: 0; font: 600 13px/18px var(--title-font); color: #a2a2a6; }
                .tools { display: flex; height: 25px; flex: none; border-bottom: 1px solid #8a8a86; }
                .work { display: flex; flex: 1; min-height: 0; background: var(--face); }
                .side { flex: none; width: 25px; border-right: 1px solid var(--shadow); }
                .desk {
                    display: flex;
                    flex: 1;
                    min-width: 0;
                    padding: 3px 2px 1px 0;
                    border-left: 2px solid #8a8a86;
                    background: #b5b5b5;
                    box-shadow: inset 0 1px #8a8a86;
                }
            </style>
            <div class="title">
                <xp-icon name="sap"></xp-icon>
                <h1>SAP2000 - 1 primjer</h1>
                <caption-buttons restore></caption-buttons>
            </div>
            <menu-bar items="_File _Edit _View _Define _Bridge D_raw _Select _Assign A_nalyze Dis_play Desi_gn _Options _Help"></menu-bar>
            <div class="tools">
                <tool-group>
                    <tool-button icon="new"></tool-button>
                    <tool-button icon="open"></tool-button>
                    <hr>
                    <tool-button icon="save"></tool-button>
                    <tool-button icon="print"></tool-button>
                    <hr>
                    <tool-button icon="undo" off></tool-button>
                    <tool-button icon="redo" off></tool-button>
                    <hr>
                    <tool-button icon="pencil"></tool-button>
                    <hr>
                    <tool-button icon="lock"></tool-button>
                    <hr>
                    <tool-button icon="run"></tool-button>
                    <hr>
                    <tool-button icon="zoomwin"></tool-button>
                    <tool-button icon="zoomfull"></tool-button>
                    <tool-button icon="zoomprev"></tool-button>
                    <tool-button icon="zoomin"></tool-button>
                    <tool-button icon="zoomout"></tool-button>
                    <hr>
                    <tool-button icon="pan"></tool-button>
                    <tool-button icon="feet" off></tool-button>
                    <hr>
                    <tool-button label="3-d">3-d</tool-button>
                    <tool-button label="xy">xy</tool-button>
                    <tool-button label="xz">xz</tool-button>
                    <tool-button label="yz">yz</tool-button>
                    <tool-button label="nv" off>nv</tool-button>
                    <tool-button icon="rotate"></tool-button>
                    <tool-button icon="glasses"></tool-button>
                    <hr>
                    <tool-button icon="up" off></tool-button>
                    <tool-button icon="down" off></tool-button>
                    <hr>
                    <tool-button icon="shrink"></tool-button>
                    <tool-button icon="check"></tool-button>
                    <hr>
                    <tool-button icon="ratio"></tool-button>
                    <tool-drop more></tool-drop>
                </tool-group>
                <tool-group>
                    <tool-button icon="ibeam"></tool-button>
                    <tool-drop></tool-drop>
                    <hr>
                    <tool-button icon="area" off></tool-button>
                    <tool-drop off></tool-drop>
                    <hr>
                    <tool-drop more></tool-drop>
                </tool-group>
                <tool-group>
                    <tool-button icon="portal"></tool-button>
                    <tool-button icon="portal2" off></tool-button>
                    <tool-button icon="moment" off></tool-button>
                    <tool-drop off></tool-drop>
                    <hr>
                    <tool-drop more></tool-drop>
                </tool-group>
            </div>
            <div class="work">
                <div class="side">
                    <tool-group vertical>
                        <tool-button icon="pointer" pressed></tool-button>
                        <tool-button icon="reshape"></tool-button>
                        <hr>
                        <tool-button icon="dot"></tool-button>
                        <hr>
                        <tool-button icon="line"></tool-button>
                        <tool-button icon="linedot"></tool-button>
                        <tool-button icon="brace" off></tool-button>
                        <tool-button icon="quick" off></tool-button>
                        <hr>
                        <tool-button icon="poly"></tool-button>
                        <tool-button icon="grayrect" off></tool-button>
                        <tool-button icon="graydot" off></tool-button>
                        <tool-drop side></tool-drop>
                    </tool-group>
                    <tool-group vertical>
                        <select-button>all</select-button>
                        <select-button>ps</select-button>
                        <select-button>clr</select-button>
                        <tool-button icon="clearsel"></tool-button>
                        <tool-drop side></tool-drop>
                    </tool-group>
                    <tool-group vertical>
                        <tool-button icon="snappoint" pressed></tool-button>
                        <tool-button icon="snapends"></tool-button>
                        <tool-button icon="snapcross"></tool-button>
                        <tool-button icon="snapperp"></tool-button>
                        <tool-button icon="snapline"></tool-button>
                        <tool-button icon="snapgrid"></tool-button>
                        <tool-drop side></tool-drop>
                    </tool-group>
                </div>
                <div class="desk">
                    <mdi-window caption="3-D View"><space-view></space-view></mdi-window>
                    <mdi-window caption="X-Z Plane @ Y=0"><plane-view></plane-view></mdi-window>
                </div>
            </div>
            <status-bar></status-bar>
            <task-bar></task-bar>
            <station-dialog></station-dialog>
        `;
    }
}

customElements.define('xp-icon', XpIcon);
customElements.define('tool-button', ToolButton);
customElements.define('tool-drop', ToolDrop);
customElements.define('tool-group', ToolGroup);
customElements.define('select-button', SelectButton);
customElements.define('caption-buttons', CaptionButtons);
customElements.define('mdi-window', MdiWindow);
customElements.define('space-view', SpaceView);
customElements.define('plane-view', PlaneView);
customElements.define('menu-bar', MenuBar);
customElements.define('station-dialog', StationDialog);
customElements.define('status-bar', StatusBar);
customElements.define('task-button', TaskButton);
customElements.define('task-bar', TaskBar);
customElements.define('sap-app', SapApp);
</script>
</body>
</html>
